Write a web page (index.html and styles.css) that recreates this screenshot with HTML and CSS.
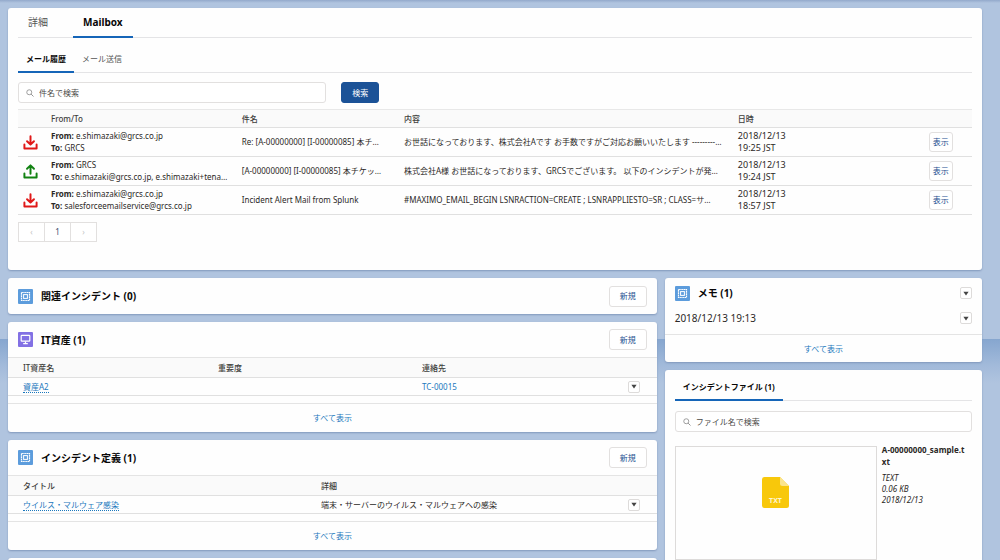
FILE: index.html
```
<!DOCTYPE html>
<html lang="ja">
<head>
<meta charset="utf-8">
<meta name="viewport" content="width=device-width, initial-scale=1">
<title>Mailbox</title>
<link rel="stylesheet" href="styles.css">
</head>
<body>
<svg class="defs" aria-hidden="true">
  <symbol id="i-search" viewBox="0 0 16 16"><circle cx="6.5" cy="6.5" r="5" fill="none" stroke="currentColor" stroke-width="1.6"/><path d="M10.2 10.2 15 15" stroke="currentColor" stroke-width="1.8"/></symbol>
  <symbol id="i-in" viewBox="0 0 16 16"><path d="M1.5 10V14.4H14.5V10M8 1.2V9.8M4.300 6.600 8 10.200 11.700 6.600" fill="none" stroke="currentColor" stroke-width="2.1" stroke-linecap="round" stroke-linejoin="round"/></symbol>
  <symbol id="i-out" viewBox="0 0 16 16"><path d="M1.5 10V14.4H14.5V10M8 10.5V2M4.300 5.100 8 1.500 11.700 5.100" fill="none" stroke="currentColor" stroke-width="2.1" stroke-linecap="round" stroke-linejoin="round"/></symbol>
  <symbol id="i-box" viewBox="0 0 15 15"><rect x="3.5" y="3.5" width="8" height="8" fill="none" stroke="#fff" stroke-width="1.2" stroke-dasharray="1.4 .4"/><rect x="5.6" y="5.6" width="3.8" height="3.8" fill="none" stroke="#fff"/></symbol>
  <symbol id="i-monitor" viewBox="0 0 15 15"><rect x="3.2" y="3.4" width="8.6" height="5.8" rx=".7" fill="none" stroke="#fff" stroke-width="1.2"/><path d="M7.5 9.4V11.4M5.2 11.7H9.8" stroke="#fff" stroke-width="1.2"/></symbol>
  <symbol id="i-down" viewBox="0 0 8 6"><path d="M.5.5H7.5L4 5.5Z" fill="currentColor"/></symbol>
</svg>
<main class="page">
  <section class="card mail">
    <nav class="tabs tabs-main">
      <a class="tab" href="#detail">詳細</a>
      <a class="tab active" href="#mailbox">Mailbox</a>
    </nav>
    <nav class="tabs tabs-sub">
      <a class="tab active" href="#history">メール履歴</a>
      <a class="tab" href="#send">メール送信</a>
    </nav>
    <form class="search-row">
      <label class="search"><svg><use href="#i-search"/></svg><input type="text" placeholder="件名で検索" aria-label="件名で検索"></label>
      <button class="btn primary" type="button">検索</button>
    </form>
    <table class="mail-table">
      <thead><tr><th class="c-icon"></th><th class="c-from">From/To</th><th class="c-subject">件名</th><th class="c-body">内容</th><th class="c-date">日時</th><th></th></tr></thead>
      <tbody>
        <tr>
          <td><svg class="dir in"><use href="#i-in"/></svg></td>
          <td><b>From:</b> e.shimazaki@grcs.co.jp<br><b>To:</b> GRCS</td>
          <td>Re: [A-00000000] [I-00000085] 本チ…</td>
          <td>お世話になっております、株式会社Aです お手数ですがご対応お願いいたします ---------…</td>
          <td class="date">2018/12/13<br>19:25 JST</td>
          <td><button class="btn small" type="button">表示</button></td>
        </tr>
        <tr>
          <td><svg class="dir out"><use href="#i-out"/></svg></td>
          <td><b>From:</b> GRCS<br><b>To:</b> e.shimazaki@grcs.co.jp, e.shimazaki+tena…</td>
          <td>[A-00000000] [I-00000085] 本チケッ…</td>
          <td>株式会社A様 お世話になっております、GRCSでございます。 以下のインシデントが発…</td>
          <td class="date">2018/12/13<br>19:24 JST</td>
          <td><button class="btn small" type="button">表示</button></td>
        </tr>
        <tr>
          <td><svg class="dir in"><use href="#i-in"/></svg></td>
          <td><b>From:</b> e.shimazaki@grcs.co.jp<br><b>To:</b> salesforceemailservice@grcs.co.jp</td>
          <td>Incident Alert Mail from Splunk</td>
          <td>#MAXIMO_EMAIL_BEGIN LSNRACTION=CREATE ; LSNRAPPLIESTO=SR ; CLASS=サ…</td>
          <td class="date">2018/12/13<br>18:57 JST</td>
          <td><button class="btn small" type="button">表示</button></td>
        </tr>
      </tbody>
    </table>
    <div class="pager">
      <button type="button" disabled aria-label="前へ">‹</button><button type="button">1</button><button type="button" disabled aria-label="次へ">›</button>
    </div>
  </section>

  <div class="columns">
    <div class="stack">
      <section class="card">
        <header class="card-head single"><svg class="badge blue"><use href="#i-box"/></svg><h2>関連インシデント (0)</h2><button class="btn" type="button">新規</button></header>
      </section>
      <section class="card">
        <header class="card-head"><svg class="badge purple"><use href="#i-monitor"/></svg><h2>IT資産 (1)</h2><button class="btn" type="button">新規</button></header>
        <table class="related">
          <thead><tr><th class="w-asset">IT資産名</th><th class="w-level">重要度</th><th>連絡先</th><th class="w-menu"></th></tr></thead>
          <tbody><tr><td><a class="dashed" href="#asset">資産A2</a></td><td></td><td><a href="#contact">TC-00015</a></td><td><button class="menu" type="button" aria-label="メニュー"><svg><use href="#i-down"/></svg></button></td></tr></tbody>
        </table>
        <footer class="all gap"><a href="#all">すべて表示</a></footer>
      </section>
      <section class="card">
        <header class="card-head"><svg class="badge blue"><use href="#i-box"/></svg><h2>インシデント定義 (1)</h2><button class="btn" type="button">新規</button></header>
        <table class="related">
          <thead><tr><th class="w-title">タイトル</th><th>詳細</th><th class="w-menu"></th></tr></thead>
          <tbody><tr><td><a class="dashed" href="#virus">ウイルス・マルウェア感染</a></td><td>端末・サーバーのウイルス・マルウェアへの感染</td><td><button class="menu" type="button" aria-label="メニュー"><svg><use href="#i-down"/></svg></button></td></tr></tbody>
        </table>
        <footer class="all gap"><a href="#all">すべて表示</a></footer>
      </section>
      <section class="card next"></section>
    </div>

    <div class="stack">
      <section class="card">
        <header class="card-head memo-head"><svg class="badge blue"><use href="#i-box"/></svg><h2>メモ (1)</h2><button class="menu" type="button" aria-label="メニュー"><svg><use href="#i-down"/></svg></button></header>
        <div class="memo-row"><span>2018/12/13 19:13</span><button class="menu" type="button" aria-label="メニュー"><svg><use href="#i-down"/></svg></button></div>
        <footer class="all"><a href="#all">すべて表示</a></footer>
      </section>
      <section class="card files">
        <nav class="tabs tabs-sub"><a class="tab active" href="#files">インシデントファイル (1)</a></nav>
        <label class="search"><svg><use href="#i-search"/></svg><input type="text" placeholder="ファイル名で検索" aria-label="ファイル名で検索"></label>
        <div class="file">
          <div class="thumb">
            <svg class="txt" viewBox="0 0 27 31"><path d="M2.5 0H18L27 9V28.5A2.5 2.5 0 0 1 24.500 31H2.500A2.500 2.500 0 0 1 0 28.500V2.500A2.500 2.500 0 0 1 2.500 0Z" fill="#f8c80b"/><path d="M18 0 27 9H20.500A2.500 2.500 0 0 1 18 6.500Z" fill="#fbe48b"/><text x="13.500" y="26" text-anchor="middle">TXT</text></svg>
          </div>
          <div class="info"><strong>A-00000000_sample.txt</strong><span class="meta">TEXT<br>0.06 KB<br>2018/12/13</span></div>
        </div>
      </section>
    </div>
  </div>
</main>
</body>
</html>
```
FILE: styles.css
```
* { box-sizing: border-box; }
body {
  margin: 0;
  background: #b0c4df;
  color: #2b2826;
  font-family: "Noto Sans", "Noto Sans CJK JP", sans-serif;
  font-size: 8px;
  line-height: 12px;
}
a { color: #1b78bd; text-decoration: none; }
.defs { position: absolute; width: 0; height: 0; }
.page {
  display: flex;
  flex-direction: column;
  gap: 8px;
  height: 100vh;
  overflow: hidden;
  padding: 8px 18px 0 8px;
  background:
    linear-gradient(#93a9cb, #b0c4df) 0 0 / 100% 3px no-repeat,
    linear-gradient(#86a6cf, #a2bada 60%, #b0c4df) 0 339px / 100% 44px no-repeat;
}
.card {
  background: #fefefe;
  border-radius: 3px;
  box-shadow: 0 1px 2px #8298bb;
}
.mail { flex: none; padding: 0 10px 28px; }

.tabs { display: flex; border-bottom: 1px solid #e4e4e6; }
.tab {
  display: block;
  padding: 0 8px;
  margin-bottom: -1px;
  border-bottom: 2px solid transparent;
  color: #555;
}
.tab.active { color: #080707; font-weight: 700; border-color: #1565b8; }
.tabs-main { font-size: 10px; line-height: 28px; gap: 15px; }
.tabs-main .tab { padding: 0 10px; }
.tabs-sub { line-height: 24px; }

.mail .tabs-sub { margin-top: 9px; }
.search-row { display: flex; gap: 15px; margin: 9px 0 6px; }
.search {
  display: flex;
  align-items: center;
  gap: 5px;
  height: 21px;
  padding: 0 7px;
  border: 1px solid #e2e0df;
  border-radius: 3px;
  background: #fff;
}
.search-row .search { width: 32.3%; }
.search svg { flex: none; width: 8px; height: 8px; color: #888; }
.search input { flex: 1; min-width: 0; border: 0; padding: 0; outline: 0; background: none; font: inherit; color: inherit; }
.search input::placeholder { color: #4a4846; opacity: 1; }

.btn {
  height: 21px;
  width: 38px;
  padding: 0;
  border: 1px solid #e2e0df;
  border-radius: 3px;
  background: #fff;
  color: #1c4f91;
  font: inherit;
}
.btn.primary { border-color: #1b5297; background: #1b5297; color: #fff; }
.btn.small { display: block; width: 24px; height: 20px; }

table { width: 100%; table-layout: fixed; border-collapse: collapse; }
th { text-align: left; font-weight: 500; color: #3e3e3c; background: #fafafa; }
th, td { padding: 0; }
.mail-table th { height: 18px; border-top: 1px solid #e8e8e8; border-bottom: 1px solid #e0e0e0; }
.mail-table td { height: 29px; border-bottom: 1px solid #e0e0e0; white-space: nowrap; }
.c-icon { width: 33px; }
.c-from { width: 20%; }
.c-subject { width: 17%; }
.c-body { width: 35%; }
.c-date { width: 20%; }
.mail-table .date { font-size: 9px; }
.dir { display: block; margin-left: 5px; width: 15px; height: 15px; }
.in { color: #e01818; }
.out { color: #128212; }

.pager { display: flex; margin-top: 7px; }
.pager button {
  width: 27px;
  height: 20px;
  margin-right: -1px;
  padding: 0;
  border: 1px solid #e2e0df;
  background: #fff;
  color: #3e4f70;
  font: inherit;
}
.pager button:disabled { color: #c4c4c4; }

.columns { display: grid; grid-template-columns: 648fr 317fr; gap: 8px; align-items: start; }
.stack { display: flex; flex-direction: column; gap: 8px; min-width: 0; }
.card-head { display: flex; align-items: center; gap: 8px; height: 35px; padding: 0 10px; }
.card-head.single { height: 36px; }
h2 { flex: 1; margin: 0; font-size: 10px; line-height: 16px; font-weight: 700; color: #080707; }
.badge { width: 15px; height: 15px; border-radius: 1px; }
.blue { background: #5c9cdc; }
.purple { background: #8270e4; }

.related th { height: 20px; border-top: 1px solid #e4e4e4; border-bottom: 1px solid #e0e0e0; }
.related td { height: 18px; border-bottom: 1px solid #e0e0e0; }
.related th:first-child, .related td:first-child { padding-left: 15px; }
.w-asset { width: 210px; }
.w-level { width: 204px; }
.w-title { width: 313px; }
.w-menu { width: 29px; }
.dashed { border-bottom: 1px dotted #1b78bd; }
.menu {
  display: grid;
  place-items: center;
  width: 12px;
  height: 12px;
  padding: 0;
  border: 1px solid #dddbda;
  border-radius: 2px;
  background: #fff;
  color: #444;
}
.menu svg { width: 6px; height: 5px; }
.all { border-top: 1px solid #e4e4e4; text-align: center; line-height: 27px; }
.all.gap { margin-top: 7px; line-height: 28px; }
.next { height: 40px; }

.card-head.memo-head { height: 30px; }
.memo-row { display: flex; justify-content: space-between; align-items: center; height: 26px; padding: 0 10px 6px; font-size: 10px; }
.files { padding: 5px 10px 10px; }
.files .search { margin-top: 10px; }
.file { display: flex; gap: 5px; margin-top: 14px; }
.thumb { display: grid; place-items: center; flex: none; width: 68%; height: 114px; padding-bottom: 22px; border: 1px solid #dddbda; }
.txt { width: 27px; height: 31px; }
.txt text { fill: #fff6cf; font-size: 7px; font-weight: 700; }
.info { flex: 1; min-width: 0; padding-right: 5px; word-break: break-all; }
.info strong { display: block; margin-top: -2px; }
.meta { display: block; margin-top: 4px; line-height: 11px; font-style: italic; }
```
